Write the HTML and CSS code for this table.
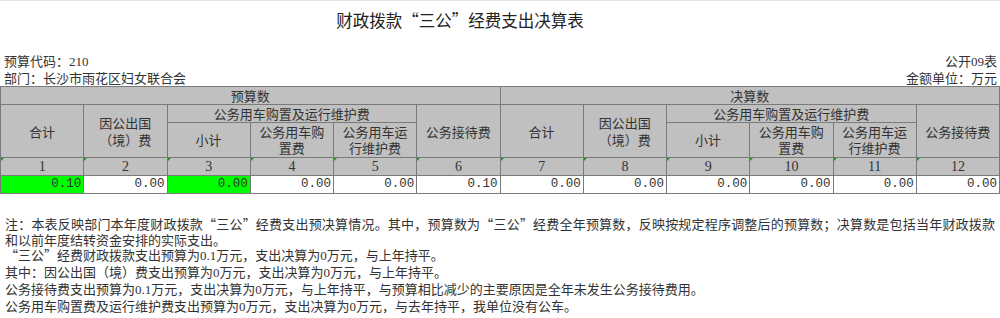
FILE: index.html
```html
<!DOCTYPE html>
<html lang="zh-CN">
<head>
<meta charset="utf-8">
<link rel="stylesheet" href="styles.css">
</head>
<body>
<div class="page">
  <div class="title-row"><h1 class="title">财政拨款“三公”经费支出决算表</h1></div>
  <div class="meta">
    <div class="meta-line"><span>预算代码：<span class="num">210</span></span><span>公开<span class="num">09</span>表</span></div>
    <div class="meta-line"><span>部门：长沙市雨花区妇女联合会</span><span>金额单位：万元</span></div>
  </div>
  <table class="grid">
    <colgroup>
      <col><col><col><col><col><col><col><col><col><col><col><col>
    </colgroup>
    <tr class="h1">
      <td colspan="6">预算数</td>
      <td colspan="6">决算数</td>
    </tr>
    <tr class="h2">
      <td rowspan="2">合计</td>
      <td rowspan="2">因公出国<br>（境）费</td>
      <td colspan="3">公务用车购置及运行维护费</td>
      <td rowspan="2">公务接待费</td>
      <td rowspan="2">合计</td>
      <td rowspan="2">因公出国<br>（境）费</td>
      <td colspan="3">公务用车购置及运行维护费</td>
      <td rowspan="2">公务接待费</td>
    </tr>
    <tr class="h3">
      <td>小计</td>
      <td>公务用车购<br>置费</td>
      <td>公务用车运<br>行维护费</td>
      <td>小计</td>
      <td>公务用车购<br>置费</td>
      <td>公务用车运<br>行维护费</td>
    </tr>
    <tr class="idx">
      <td class="mark">1</td><td class="mark">2</td><td class="mark">3</td><td class="mark">4</td><td class="mark">5</td><td class="mark">6</td>
      <td class="mark">7</td><td class="mark">8</td><td class="mark">9</td><td class="mark">10</td><td class="mark">11</td><td class="mark">12</td>
    </tr>
    <tr class="data">
      <td class="hl">0.10</td><td>0.00</td><td class="hl">0.00</td><td>0.00</td><td>0.00</td><td>0.10</td>
      <td>0.00</td><td>0.00</td><td>0.00</td><td>0.00</td><td>0.00</td><td>0.00</td>
    </tr>
  </table>
  <div class="notes">
    <p class="just">注：本表反映部门本年度财政拨款“三公”经费支出预决算情况。其中，预算数为“三公”经费全年预算数，反映按规定程序调整后的预算数；决算数是包括当年财政拨款</p>
    <p>和以前年度结转资金安排的实际支出。</p>
    <p>“三公”经费财政拨款支出预算为<span class="num">0.1</span>万元，支出决算为<span class="num">0</span>万元，与上年持平。</p>
    <p>其中：因公出国（境）费支出预算为<span class="num">0</span>万元，支出决算为<span class="num">0</span>万元，与上年持平。</p>
    <p>公务接待费支出预算为<span class="num">0.1</span>万元，支出决算为<span class="num">0</span>万元，与上年持平，与预算相比减少的主要原因是全年未发生公务接待费用。</p>
    <p>公务用车购置费及运行维护费支出预算为<span class="num">0</span>万元，支出决算为<span class="num">0</span>万元，与去年持平，我单位没有公车。</p>
  </div>
</div>
</body>
</html>
```
FILE: styles.css
```css
html, body {
  margin: 0;
  padding: 0;
  background: #ffffff;
}
body {
  font-family: "Noto Sans CJK SC", "Noto Sans", sans-serif;
  font-size: 13px;
  color: #333333;
}
.page {
  width: 1000px;
  height: 318px;
  overflow: hidden;
  border-top: 1px solid #dfe3ec;
  box-sizing: border-box;
}
.num {
  font-family: "Liberation Serif", serif;
}
.title-row {
  height: 51px;
  display: flex;
  justify-content: center;
  padding-right: 80px;
}
.title {
  margin: 0;
  padding-top: 7px;
  font-size: 16.5px;
  font-weight: normal;
  line-height: 24px;
  color: #222222;
}
.meta {
  display: flex;
  flex-direction: column;
  padding: 0 3px 0 4px;
}
.meta-line {
  display: flex;
  justify-content: space-between;
  height: 17px;
  line-height: 17px;
}
.grid {
  width: 1000px;
  table-layout: fixed;
  border-collapse: collapse;
  margin-top: 0;
}
.grid td {
  border: 1px solid #7a7a7a;
  padding: 0;
  text-align: center;
  vertical-align: middle;
  line-height: 17px;
  background: #c0c0c0;
  color: #333333;
  overflow: hidden;
  white-space: nowrap;
}
.grid tr.h1 td { height: 17px; }
.grid tr.h2 td { height: 17px; }
.grid tr.h3 td { height: 34px; line-height: 16px; }
.grid tr.idx td {
  height: 16px;
  font-family: "Liberation Serif", serif;
  font-size: 14px;
  position: relative;
}
.grid tr.idx td.mark::before {
  content: "";
  position: absolute;
  left: 0;
  top: 0;
  border-top: 3px solid #1a8f1a;
  border-right: 3px solid transparent;
}
.grid tr.data td {
  height: 17px;
  background: #ffffff;
  text-align: right;
  padding-right: 2px;
  font-family: "Liberation Mono", monospace;
  font-size: 12.5px;
}
.grid tr.data td.hl {
  background: #00ff00;
}
.notes {
  margin-top: 22px;
  padding: 0 5px;
  line-height: 15.7px;
}
.notes p {
  margin: 0;
  white-space: nowrap;
}
.notes p.just {
  white-space: normal;
  text-align: justify;
  text-align-last: justify;
}
```
